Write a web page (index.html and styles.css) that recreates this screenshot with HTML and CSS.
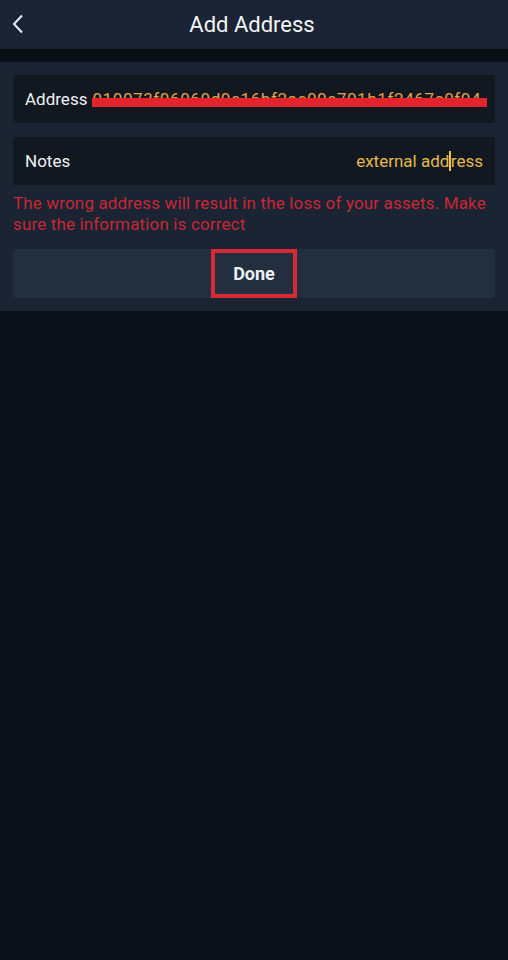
FILE: index.html
```html
<!DOCTYPE html>
<html>
<head>
    <title>Add Address</title>
    <link rel="stylesheet" href="styles.css">
</head>
<body>
    <div class="header">
        <svg class="back" width="12" height="20" viewBox="0 0 12 20">
            <path d="M10 1.5 L2 10 L10 18.5" fill="none" stroke="#e9edf2" stroke-width="2"/>
        </svg>
        <h1>Add Address</h1>
    </div>
    <div class="divider"></div>
    <div class="panel">
        <div class="row">
            <span class="label">Address</span>
            <span class="address">
                <span class="addr-text">010073f06060d0c16bf2ac00c701b1f2467c0f04</span>
                <span class="scribble"></span>
            </span>
        </div>
        <div class="row">
            <span class="label">Notes</span>
            <span class="notes">external add<span class="caret"></span>ress</span>
        </div>
        <p class="warning">The wrong address will result in the loss of your assets. Make sure the information is correct</p>
        <div class="button">
            <span class="done">Done</span>
        </div>
    </div>
</body>
</html>
```

FILE: styles.css
```css
body {
    margin: 0;
    background-color: #0b1119;
    font-family: Roboto, "Noto Sans", sans-serif;
    color: #eef1f5;
}
.header {
    height: 49px;
    background-color: #1b2434;
    display: flex;
    align-items: center;
    justify-content: center;
    position: relative;
}
.back {
    position: absolute;
    left: 12px;
    top: 14px;
}
.header h1 {
    margin: 0 4px 0 0;
    font-size: 22px;
    font-weight: 400;
    color: #f2f4f7;
}
.divider {
    height: 13px;
    background-color: #0a0f15;
}
.panel {
    background-color: #1b2432;
    padding: 13px 13px 13px 13px;
}
.row {
    height: 48px;
    background-color: #111820;
    display: flex;
    align-items: center;
    padding: 0 12px;
    margin-bottom: 14px;
    font-size: 17px;
}
.label {
    color: #eef1f5;
    flex-shrink: 0;
}
.address {
    position: relative;
    flex: 1;
    margin-left: 5px;
    margin-right: -4px;
    white-space: nowrap;
    height: 22px;
    display: flex;
    align-items: center;
}
.addr-text {
    color: #e2a24a;
    font-size: 17px;
    letter-spacing: 0.6px;
}
.scribble {
    position: absolute;
    left: 0;
    right: 0;
    top: 10px;
    height: 9px;
    background-color: #e3242d;
}
.notes {
    margin-left: auto;
    color: #e6b84c;
}
.caret {
    display: inline-block;
    width: 1.5px;
    height: 20px;
    background-color: #f0c24c;
    vertical-align: -4px;
}
.warning {
    margin: -6px 0 14px 0;
    color: #c82736;
    font-size: 17px;
    letter-spacing: 0.15px;
    line-height: 21px;
}
.button {
    height: 49px;
    background-color: #232f3e;
    border-radius: 3px;
    display: flex;
    justify-content: center;
    align-items: center;
}
.done {
    box-sizing: border-box;
    width: 86px;
    height: 49px;
    border: 4px solid #d72a36;
    display: flex;
    align-items: center;
    justify-content: center;
    font-size: 18px;
    font-weight: 700;
    color: #eef1f5;
}
```
